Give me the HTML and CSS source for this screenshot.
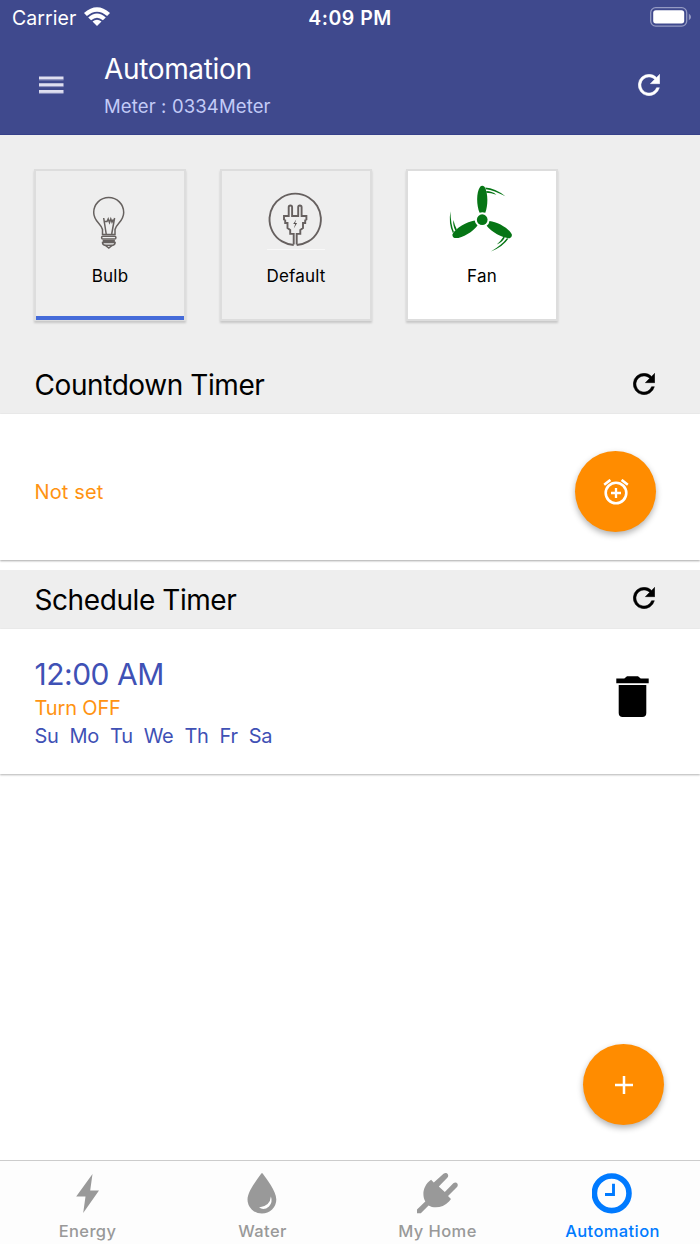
FILE: index.html
```html
<!DOCTYPE html>
<html lang="en">
<head>
<meta charset="utf-8">
<title>Automation</title>
<link rel="stylesheet" href="styles.css">
</head>
<body>
<svg class="defs" width="0" height="0" aria-hidden="true">
  <symbol id="refresh" viewBox="3.800 3.800 16.400 16.400">
    <path fill="currentColor" stroke="currentColor" stroke-width=".35" d="M17.650 6.350A7.950 7.950 0 0 0 12 4a8 8 0 1 0 7.730 10h-2.080A6 6 0 1 1 12 6c1.660 0 3.140.690 4.220 1.780L13 11h7V4z"/>
  </symbol>
</svg>
<div class="screen">
  <header class="header">
    <div class="status">
      <div class="status-left">
        <span class="t carrier">Carrier</span>
        <svg class="wifi" width="26" height="19" viewBox="0 0 26 19" fill="#fff">
          <path d="M0 6.100Q13-5.400 26 6.100L23.100 9Q13 .3 2.900 9z"/>
          <path d="M4.200 10.400Q13 2.500 21.800 10.400L18.900 13.300Q13 8.200 7.100 13.300z"/>
          <path d="M8.500 14.600Q13 10.700 17.500 14.600L13 19z"/>
        </svg>
      </div>
      <span class="t clock">4:09 PM</span>
      <div class="status-right">
        <svg width="42" height="20" viewBox="0 0 42 20">
          <rect x=".7" y=".7" width="36" height="18.400" rx="5" fill="none" stroke="#949ac3" stroke-width="1.300"/>
          <rect x="3.200" y="3.200" width="31" height="13.300" rx="2.700" fill="#fff"/>
          <path d="M38.800 6.600Q43.300 9.900 38.800 13.200z" fill="#949ac3"/>
        </svg>
      </div>
    </div>
    <div class="appbar">
      <svg class="menu" width="25" height="19" viewBox="0 0 25 19">
        <path d="M0 2h24.500M0 8.700h24.500M0 15.400h24.500" stroke="#dfdff0" stroke-width="3"/>
        <path d="M0 3.900h24.500M0 10.600h24.500M0 17.300h24.500" stroke="#9196c2" stroke-width="1"/>
      </svg>
      <div class="titles">
        <h1 class="t title">Automation</h1>
        <div class="t meter">Meter : 0334Meter</div>
      </div>
      <svg class="refresh-head" width="22" height="22"><use href="#refresh"/></svg>
    </div>
  </header>

  <section class="devices">
    <div class="tile selected">
      <svg class="tile-icon" width="70" height="68" viewBox="1 -7 70 68" fill="none" stroke="#66615f" stroke-width="1.500">
        <path d="M28.500 42.500V37.500C27.500 32 19.700 29.500 19.700 20.500a15 15 0 0 1 30 0C49.700 29.500 42 32 41 37.500V42.500z"/>
        <path d="M32.200 42L29.700 26M37.700 42L40.600 26M29.500 29.500h3.500l1.200-2.500 1.300 3.500 1.300-3.500 1.200 3.200 1-2 1.400 1.300"/>
        <rect x="27.600" y="44.300" width="14.300" height="2.700" rx="1.300"/>
        <path d="M28.700 49.100h12.200" stroke-width="2.300"/>
        <path d="M28.500 50.500q0 2.500 3 3l3.300 2.500 3.300-2.500q3-.5 3-3z"/>
        <path d="M31.300 53.300h7" stroke-width="1.500"/>
      </svg>
      <span class="t tile-label">Bulb</span>
    </div>
    <div class="tile">
      <svg class="tile-icon" width="70" height="68" viewBox="1 1.500 70 68" fill="none" stroke="#66605f" stroke-width="1.900">
        <path d="M7 66h58" stroke="#f8f8f8" stroke-width="1"/>
        <path d="M33.700 61V50.400H30.200V46.500L27.500 44.500V39.500H25.200V36.700L24 36V32.500H28.700V23.700a1.700 1.700 0 0 1 3.400 0V32.500H38.200V23.700a1.700 1.700 0 0 1 3.400 0V32.500H46.400V36L45.200 36.700V39.500H43V44.500L40.300 46.500V50.400H36.700V61"/>
        <path d="M33.700 61.500A25.700 25.700 0 1 1 36.700 61.500"/>
        <path d="M36.200 36l-3 4.600h2l-1.400 4.400 3.300-5.400h-2z" fill="#55504f" stroke="none"/>
      </svg>
      <span class="t tile-label">Default</span>
    </div>
    <div class="tile white">
      <svg class="tile-icon" width="70" height="68" viewBox=".3 2 68 66" fill="#067515">
        <circle cx="34.500" cy="35.700" r="5.200"/>
        <g id="blade">
          <path d="M32 29C28.900 22 28.500 9 32.500 3.600Q34.500 1.900 36.700 3.600C40.300 9 40.300 22 37.500 29Q34.500 27.800 32 29z"/>
          <path d="M37.500 4.500Q47 5 57 13Q46 7 38 6zM38.500 7.900Q44 8 48.300 11.400Q43 9.700 38.500 9.600z"/>
        </g>
        <use href="#blade" transform="rotate(120 34.500 35.700)"/>
        <use href="#blade" transform="rotate(240 34.500 35.700)"/>
      </svg>
      <span class="t tile-label">Fan</span>
    </div>
  </section>

  <div class="section-head countdown-head">
    <h2 class="t section-title">Countdown Timer</h2>
    <svg width="22" height="22"><use href="#refresh"/></svg>
  </div>
  <section class="countdown">
    <span class="t not-set">Not set</span>
    <button class="fab" aria-label="Add countdown">
      <svg width="26" height="26" viewBox="0 0 26 26" fill="none" stroke="#fff">
        <circle cx="13" cy="14" r="10.300" stroke-width="2.600"/>
        <path d="M13 9v10M8 14h10" stroke-width="2.300"/>
        <path d="M1.200 5.700L7.400.9M24.800 5.700L18.600.9" stroke-width="2.600"/>
      </svg>
    </button>
  </section>

  <div class="section-head schedule-head">
    <h2 class="t section-title">Schedule Timer</h2>
    <svg width="22" height="22"><use href="#refresh"/></svg>
  </div>
  <section class="schedule">
    <div class="schedule-text">
      <div class="t time">12:00 AM</div>
      <div class="t action">Turn OFF</div>
      <div class="days"><span class="t">Su</span><span class="t">Mo</span><span class="t">Tu</span><span class="t">We</span><span class="t">Th</span><span class="t">Fr</span><span class="t">Sa</span></div>
    </div>
    <svg class="trash" width="33" height="42" viewBox="0 0 33 42">
      <path d="M.3 2.500h8L11 .3h11L24.700 2.500h8v4.700H.3zM2.700 9h27.600v28q0 4-4 4H6.700q-4 0-4-4z"/>
    </svg>
  </section>

  <main class="blank">
    <button class="fab add" aria-label="Add schedule">
      <svg width="18" height="18" viewBox="0 0 18 18" stroke="#fff" stroke-width="2.500"><path d="M9 0v18M0 9h18"/></svg>
    </button>
  </main>

  <nav class="tabs">
    <div class="tab">
      <svg width="42" height="42" viewBox="0 0 42 42" fill="#999"><path d="M25.500 1L9.200 23.500H18.500L16.200 40L32 17.500H23.200z"/></svg>
      <span class="t">Energy</span>
    </div>
    <div class="tab">
      <svg width="42" height="42" viewBox="1 0 42 42"><path fill="#999" d="M20.500.3Q21 0 21.500.3C25 5.500 35.300 18 35.300 26.500a14.300 14 0 0 1-28.800 0C6.500 18 17 5.500 20.500.3z"/><path d="M29.900 23.500Q29.200 33 18 34.600Q23 38 28 33.500Q32 29 29.900 23.500z" fill="#fff"/></svg>
      <span class="t">Water</span>
    </div>
    <div class="tab">
      <svg width="42" height="42" viewBox=".7 0 42 42"><path fill="#999" d="M14.800 6.800L17.500 9.500L27.200.8Q30-1 31.500 1.200Q32.500 3 31 4.800L22.500 13.500L28.500 19L37 10.300Q39.500 8.500 41.200 10.700Q42 12.500 40.500 14.300L31.700 23L34.700 26L32.700 28.600C27 35 17.500 35.700 12.300 32.500L4.500 40.300H.7V36.500L9 28.500C5.500 22.500 6.500 12.500 14.800 6.800z"/></svg>
      <span class="t">My Home</span>
    </div>
    <div class="tab active">
      <svg width="42" height="42" viewBox="1 0 42 42" fill="none" stroke="#007aff"><circle cx="20.700" cy="20.300" r="17.300" stroke-width="5.600"/><path d="M22.500 10.700V21.500H14" stroke-width="2.900"/></svg>
      <span class="t">Automation</span>
    </div>
  </nav>
</div>
</body>
</html>
```
FILE: styles.css
```css
* { box-sizing: border-box; }
body { margin: 0; background: #fff; font-family: Inter, "Liberation Sans", sans-serif; color: #000; }
h1, h2 { margin: 0; font-weight: 400; }
svg { display: block; flex: none; }
.defs { position: absolute; }
.t { white-space: nowrap; }
.screen { width: 700px; height: 1244px; display: flex; flex-direction: column; overflow: hidden; }

.header { height: 135px; flex: none; background: #3f498d; color: #fff; border-bottom: 1px solid #364089; }
.status { height: 36px; display: grid; grid-template-columns: 1fr auto 1fr; align-items: center; padding: 0 9px 0 12px; }
.status-left { display: flex; align-items: center; gap: 8px; }
.wifi { margin-bottom: 3px; }
.carrier { font-size: 19.500px; letter-spacing: .05px; }
.clock { font-size: 19.500px; font-weight: 600; letter-spacing: .5px; margin-right: 3px; }
.status-right { display: flex; justify-content: flex-end; margin: 0 -1px 2px 0; }
.appbar { height: 98px; display: flex; align-items: flex-start; padding: 0 40px 0 39px; }
.menu { margin-top: 40px; }
.titles { margin-left: 40px; padding-top: 15px; flex: 1; }
.title { font-size: 28px; line-height: 36px; letter-spacing: -.35px; }
.meter { font-size: 18.500px; line-height: 26px; margin-top: 6px; letter-spacing: .13px; color: #c3cbf7; }
.refresh-head { margin-top: 38px; }

.devices { height: 219px; flex: none; background: #eee; padding: 34px 34px 0; display: flex; gap: 34px; }
.tile { width: 152px; height: 152px; border: 2px solid #ddd; box-shadow: 0 2px 2px rgba(0,0,0,.16); display: flex; flex-direction: column; align-items: center; padding-top: 14px; }
.tile.selected { border-bottom-width: 1px; box-shadow: inset 0 -4px #456bd9, 0 2px 2px rgba(0,0,0,.16); }
.tile.white { background: #fff; }
.tile-label { font-size: 17px; line-height: 22px; margin-top: 12px; letter-spacing: .2px; }

.section-head { flex: none; background: #eee; display: flex; align-items: center; justify-content: space-between; padding: 0 45px 0 34.500px; }
.countdown-head { height: 60px; }
.countdown-head .section-title { padding-top: 2px; }
.schedule-head { height: 59px; margin-top: 10px; }
.schedule-head svg { margin-bottom: 3px; }
.section-title { font-size: 28px; line-height: 36px; letter-spacing: -.42px; }
.countdown { height: 146px; flex: none; display: flex; align-items: center; justify-content: space-between; padding: 10px 44px 0 34.500px; box-shadow: 0 1px 2px rgba(0,0,0,.35); }
.not-set { font-size: 20px; color: #ff9312; letter-spacing: .15px; }
.fab { width: 81px; height: 81px; border: 0; border-radius: 50%; padding: 0; background: #ff8c00; display: flex; align-items: center; justify-content: center; box-shadow: 0 3px 6px rgba(0,0,0,.3); }
.countdown .fab { margin-bottom: 1px; }

.schedule { height: 145px; flex: none; display: flex; justify-content: space-between; padding: 26px 51px 0 34.500px; box-shadow: 0 1px 2px rgba(0,0,0,.3); }
.time { font-size: 30px; line-height: 38px; letter-spacing: -.5px; color: #3f51b5; }
.action { font-size: 20px; line-height: 28px; padding-top: 1px; letter-spacing: -.15px; color: #ff9312; }
.days { display: flex; gap: 11px; font-size: 20px; line-height: 28px; letter-spacing: -.3px; color: #3f51b5; }
.trash { margin-top: 21px; }

.blank { flex: 1; position: relative; }
.add { position: absolute; right: 36px; bottom: 35px; }

.tabs { height: 84px; flex: none; border-top: 1px solid #ccc; background: #fdfdfd; display: grid; grid-template-columns: repeat(4, 1fr); }
.tab { display: flex; flex-direction: column; align-items: center; padding-top: 12px; color: #999; font-size: 16.500px; font-weight: 500; letter-spacing: .4px; line-height: 20px; }
.tab span { margin-top: 6px; }
.tab.active { color: #007aff; }
```
